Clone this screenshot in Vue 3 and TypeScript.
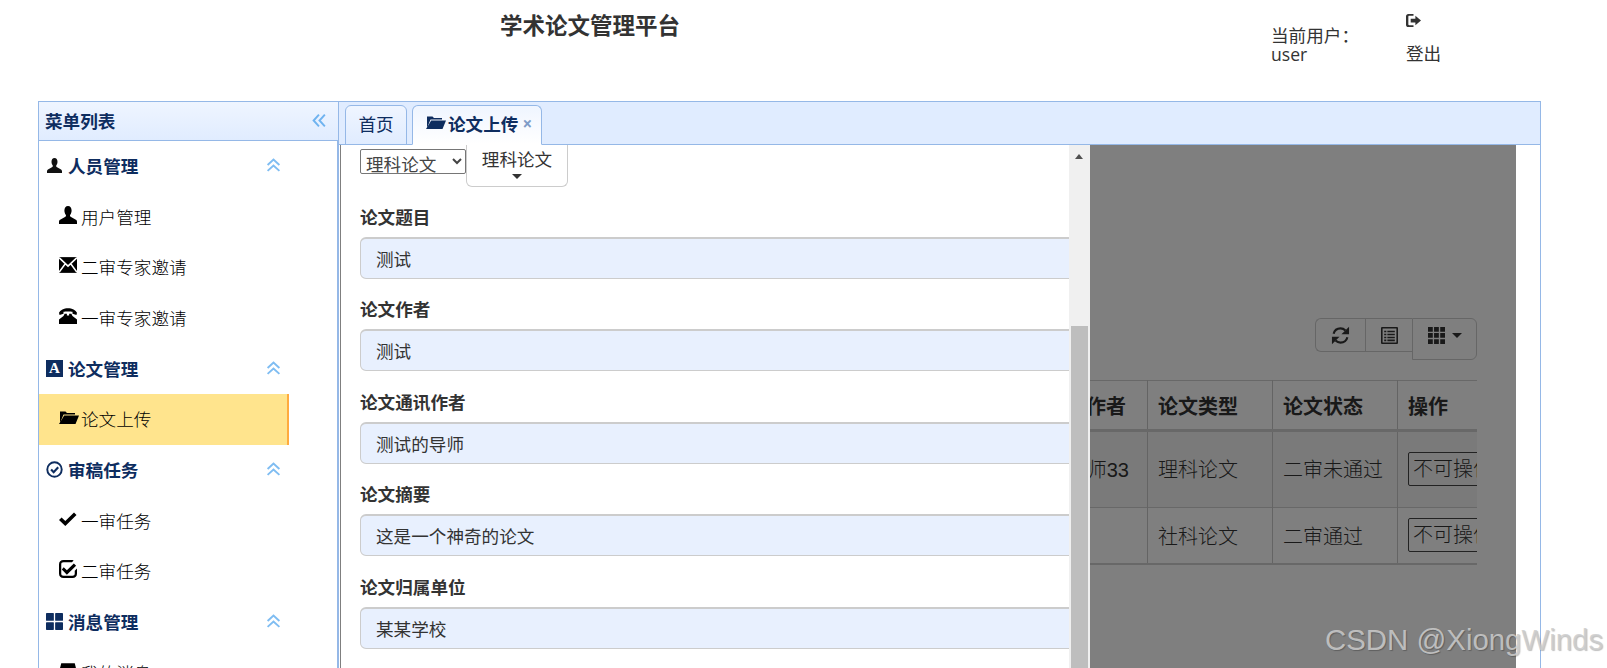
<script setup lang="ts">
interface Item { icon: string; label: string; active?: boolean }
interface Group { icon: string; label: string; items: Item[] }

const groups: Group[] = [
  { icon: 'user', label: '人员管理', items: [
    { icon: 'user', label: '用户管理' },
    { icon: 'envelope', label: '二审专家邀请' },
    { icon: 'phone', label: '一审专家邀请' },
  ] },
  { icon: 'font', label: '论文管理', items: [
    { icon: 'folder', label: '论文上传', active: true },
  ] },
  { icon: 'okcircle', label: '审稿任务', items: [
    { icon: 'ok', label: '一审任务' },
    { icon: 'check', label: '二审任务' },
  ] },
  { icon: 'large', label: '消息管理', items: [
    { icon: 'inbox', label: '我的消息' },
  ] },
]

const fields = [
  { label: '论文题目', value: '测试' },
  { label: '论文作者', value: '测试' },
  { label: '论文通讯作者', value: '测试的导师' },
  { label: '论文摘要', value: '这是一个神奇的论文' },
  { label: '论文归属单位', value: '某某学校' },
]

const columns = ['论文题目', '论文作者', '导师作者', '论文类型', '论文状态', '操作']
const rows = [
  ['测试', '测试', '导师33', '理科论文', '二审未通过'],
  ['测试', '测试', '', '社科论文', '二审通过'],
]
</script>

<template>
  <div class="page">
    <svg class="defs" aria-hidden="true">
      <symbol id="i-user" viewBox="0 .5 16 14" preserveAspectRatio="none"><path d="M8 .5C6 .5 4.800 2 4.800 4c0 1.300.5 2.500 1.200 3.300.4.500.3 1.200-.3 1.500L1 11.200c-.6.300-1 .9-1 1.600V14.500h16v-1.700c0-.7-.4-1.300-1-1.600L10.300 8.800c-.6-.3-.7-1-.3-1.500.7-.8 1.200-2 1.200-3.300C11.200 2 10 .5 8 .5z"/></symbol>
      <symbol id="i-envelope" viewBox="0 0 16 16"><rect y="1" width="16" height="14"/><path d="M0 1.500 8 9l8-7.500M0 14.500 5.500 7M16 14.500 10.500 7" stroke="#fff" stroke-width="1.500" fill="none"/></symbol>
      <symbol id="i-phone" viewBox="0 0 16 16"><path d="M0 5.200C1 2.500 4.500 1 8 1s7 1.500 8 4.200L15.500 7 12 6V4.300C10.500 3.800 5.500 3.800 4 4.300V6L.5 7z"/><path d="M5 6h2v1.500h2V6h2l1 2 4 3v4H0v-4l4-3z"/></symbol>
      <symbol id="i-folder" viewBox="0 0 20 16"><path d="M1 14 1 2.500h5.500L8 4h8v1.500H4.500z"/><path d="M5.200 6.500H20L16.500 15H0z"/></symbol>
      <symbol id="i-okcircle" viewBox="0 0 16 16"><circle cx="8" cy="8" r="6.800" fill="none" stroke="currentColor" stroke-width="1.800"/><path d="M4.800 8 7.200 10.500 11.500 5.800" fill="none" stroke="currentColor" stroke-width="2"/></symbol>
      <symbol id="i-ok" viewBox="0 0 18 16"><path d="M0 9 2.600 6.400 6.300 10 15 1.500 17.500 4 6.300 15z"/></symbol>
      <symbol id="i-check" viewBox="0 0 16 16"><path d="M13 .5 11.500 2H4C2.500 2 2 2.600 2 4v8c0 1.200.6 2 2 2h8c1.200 0 2-.7 2-2V9.500l2-2V12c0 2.500-1.500 4-4 4H4c-2.500 0-4-1.500-4-4V4c0-2.500 1.500-4 4-4h8c.4 0 .7.200 1 .5z"/><path d="M4.200 6.500 7 9.200 13.200 3l2 2L7 13.200 2.500 8.500z"/></symbol>
      <symbol id="i-large" viewBox="0 0 16 16"><rect width="7.400" height="7.400" rx=".6"/><rect x="8.600" width="7.400" height="7.400" rx=".6"/><rect y="8.600" width="7.400" height="7.400" rx=".6"/><rect x="8.600" y="8.600" width="7.400" height="7.400" rx=".6"/></symbol>
      <symbol id="i-inbox" viewBox="0 0 16 16"><path d="M2 1h12l2 8v5H0V9z"/></symbol>
      <symbol id="i-logout" viewBox="0 0 16 16"><path d="M2.500 1H8v2H3.500C3 3 2.500 3.400 2.500 4v8c0 .6.500 1 1 1H8v2H2.500C1 15 0 14 0 12.500v-9C0 2 1 1 2.500 1z"/><path d="M5 6h5V3l6 5-6 5v-3H5z"/></symbol>
      <symbol id="i-refresh" viewBox="0 0 16 16"><path d="M2.200 6.500C2.900 3.800 5.200 2 8 2c1.700 0 3.100.7 4.200 1.800" fill="none" stroke="currentColor" stroke-width="1.800"/><path d="M15.200.6V7H8.800z"/><path d="M13.800 9.500C13.100 12.200 10.800 14 8 14c-1.700 0-3.100-.7-4.200-1.800" fill="none" stroke="currentColor" stroke-width="1.800"/><path d="M.8 15.400V9h6.400z"/></symbol>
      <symbol id="i-listalt" viewBox="0 0 16 16"><path fill-rule="evenodd" d="M1 0h14a1 1 0 0 1 1 1v14a1 1 0 0 1-1 1H1a1 1 0 0 1-1-1V1a1 1 0 0 1 1-1zm.5 1.500v13h13v-13z"/><path d="M3 3.500h2v1.500H3zM6 3.500h7v1.500H6zM3 6.300h2v1.500H3zM6 6.300h7v1.500H6zM3 9.100h2v1.500H3zM6 9.100h7v1.500H6zM3 11.800h2v1.500H3zM6 11.800h7v1.500H6z"/></symbol>
      <symbol id="i-th" viewBox="0 0 16 16"><path d="M0 0h4.500v4.500H0zM5.700 0h4.500v4.500H5.700zM11.500 0H16v4.500h-4.500zM0 5.700h4.500v4.500H0zM5.700 5.700h4.500v4.500H5.700zM11.500 5.700H16v4.500h-4.500zM0 11.500h4.500V16H0zM5.700 11.500h4.500V16H5.700zM11.500 11.500H16V16h-4.500z"/></symbol>
      <symbol id="i-chev" viewBox="0 0 14 14"><path d="M1.500 6.500 7 1.500l5.500 5M1.500 12 7 7l5.500 5" fill="none" stroke="currentColor" stroke-width="1.800"/></symbol>
      <symbol id="i-chevl" viewBox="0 0 14 14"><path d="M6.500 1.500 1.500 7l5 5.500M12 1.500 7 7l5 5.500" fill="none" stroke="currentColor" stroke-width="1.800"/></symbol>
    </svg>

    <header class="top">
      <h1 class="title">学术论文管理平台</h1>
      <div class="who">
        <div>当前用户：</div>
        <div class="who-name">user</div>
      </div>
      <div class="logout">
        <svg class="ico-logout"><use href="#i-logout" /></svg>
        <div>登出</div>
      </div>
    </header>

    <main class="layout">
      <aside class="side">
        <div class="side-head">
          <span>菜单列表</span>
          <svg class="ico-collapse"><use href="#i-chevl" /></svg>
        </div>
        <div v-for="g in groups" :key="g.label" class="group">
          <div class="group-head">
            <span v-if="g.icon === 'font'" class="font-ico">A</span>
            <svg v-else class="ico-head" :class="'h-' + g.icon"><use :href="'#i-' + g.icon" /></svg>
            <span class="group-label">{{ g.label }}</span>
            <svg class="ico-chev"><use href="#i-chev" /></svg>
          </div>
          <div
            v-for="it in g.items"
            :key="it.label"
            class="item"
            :class="{ active: it.active }"
          >
            <svg class="ico-item" :class="'ico-' + it.icon"><use :href="'#i-' + it.icon" /></svg>
            <span>{{ it.label }}</span>
          </div>
        </div>
      </aside>

      <section class="center">
        <div class="tabs">
          <div class="tab">首页</div>
          <div class="tab tab-on">
            <svg class="ico-tab"><use href="#i-folder" /></svg>
            <span>论文上传</span>
            <span class="close">×</span>
          </div>
        </div>

        <div class="body">
          <div class="toolbar">
            <div class="tbtn tbtn-a"><svg class="ico-tool ico-refresh"><use href="#i-refresh" /></svg></div>
            <div class="tbtn tbtn-b"><svg class="ico-tool"><use href="#i-listalt" /></svg></div>
            <div class="tbtn tbtn-c"><svg class="ico-tool"><use href="#i-th" /></svg><i class="caret"></i></div>
          </div>
          <div class="table-wrap">
            <table class="grid">
              <colgroup>
                <col class="c1" /><col class="c1" /><col class="c2" /><col class="c3" /><col class="c3" /><col class="c4" />
              </colgroup>
              <thead>
                <tr>
                  <th v-for="(c, i) in columns" :key="i" :class="{ 'to-right': i === 2 }">{{ c }}</th>
                </tr>
              </thead>
              <tbody>
                <tr v-for="(r, ri) in rows" :key="ri" :class="ri === 0 ? 'odd' : 'even'">
                  <td v-for="(v, ci) in r" :key="ci" :class="{ 'to-right': ci === 2 }">{{ v }}</td>
                  <td>
                    <select class="op"><option>不可操作</option></select>
                  </td>
                </tr>
              </tbody>
            </table>
          </div>

          <div class="backdrop">
            <div class="modal">
              <div class="modal-body">
                <div class="type-row">
                  <select class="type-native"><option>理科论文</option><option>社科论文</option></select>
                  <div class="type-btn">
                    <span>理科论文</span>
                    <i class="caret"></i>
                  </div>
                </div>
                <div v-for="f in fields" :key="f.label" class="field">
                  <label class="field-label">{{ f.label }}</label>
                  <input class="field-input" :value="f.value" readonly />
                </div>
              </div>
              <div class="scroll">
                <i class="scroll-up"></i>
                <div class="scroll-thumb"></div>
              </div>
            </div>
          </div>
        </div>
      </section>
    </main>

    <div class="mark">CSDN @XiongWinds</div>
  </div>
</template>

<style>
html, body { margin: 0; padding: 0; background: #fff; overflow: hidden; }
</style>

<style scoped>
.page {
  position: relative;
  width: 1607px;
  height: 668px;
  overflow: hidden;
  background: #fff;
  color: #333;
  font-family: "Open Sans", "Noto Sans CJK SC", sans-serif;
  font-size: 17.6px;
}
.defs { position: absolute; width: 0; height: 0; }
svg { fill: currentColor; display: block; flex: none; }

.top {
  height: 101px;
  display: flex;
  align-items: flex-start;
  box-sizing: border-box;
}
.title {
  margin: 10px 0 0 500px;
  width: 771px;
  font-size: 22.5px;
  line-height: 32px;
  font-weight: 700;
  color: #333;
}
.who {
  width: 135px;
  margin-top: 26px;
  line-height: 19px;
}
.logout { line-height: 24px; margin-top: 13px; }
.ico-logout { width: 15px; height: 15px; margin-bottom: 13px; }

.layout {
  display: flex;
  margin-left: 38px;
  width: 1503px;
  height: 567px;
}
.side {
  width: 300px;
  flex: none;
  box-sizing: border-box;
  border-left: 1px solid #95b8e7;
  border-right: 1px solid #95b8e7;
  color: #0e2d5f;
}
.side-head {
  height: 40px;
  box-sizing: border-box;
  margin-right: -1px;
  padding: 0 11px 2px 6px;
  display: flex;
  align-items: center;
  justify-content: space-between;
  font-weight: 700;
  background: linear-gradient(#eff5ff, #e0ecff);
  border-top: 1px solid #95b8e7;
  border-bottom: 1px solid #95b8e7;
}
.ico-collapse { width: 15px; height: 15px; color: #6fb3f0; }

.group-head {
  height: 50.7px;
  box-sizing: border-box;
  display: flex;
  align-items: center;
  padding: 0 0 2px 7px;
  width: 245px;
  font-weight: 700;
}
.ico-head { width: 17px; height: 17px; margin-right: 5px; }
.h-user { width: 15px; height: 15px; margin: 0 6px 0 1px; color: #111; }
.font-ico {
  width: 17px;
  height: 17px;
  margin-right: 5px;
  background: #0e2d5f;
  color: #fff;
  font: 700 15px/17px "Liberation Serif", serif;
  text-align: center;
  flex: none;
}
.group-label { width: 198px; }
.ico-chev { width: 15px; height: 15px; color: #7fbdf2; }
.item {
  height: 50.7px;
  width: 250px;
  box-sizing: border-box;
  display: flex;
  align-items: center;
  padding: 0 0 2px 20px;
  color: #000;
  font-weight: 300;
}
.item.active {
  background: #ffe48d;
  border-right: 2px solid #ffab3f;
}
.ico-item { width: 18px; height: 18px; margin-right: 4px; margin-top: -3px; color: #000; }
.ico-folder { width: 20px; margin-right: 2px; }

.center {
  flex: 1;
  min-width: 0;
  display: flex;
  flex-direction: column;
  box-sizing: border-box;
  border-left: 1px solid #95b8e7;
  border-right: 1px solid #95b8e7;
}
.tabs {
  height: 44px;
  flex: none;
  box-sizing: border-box;
  display: flex;
  align-items: flex-end;
  gap: 5px;
  padding-left: 6px;
  background: #e0ecff;
  border-top: 1px solid #95b8e7;
  border-bottom: 1px solid #95b8e7;
}
.tab {
  width: 62px;
  height: 40px;
  margin-bottom: -1px;
  padding-bottom: 3px;
  box-sizing: border-box;
  display: flex;
  align-items: center;
  justify-content: center;
  color: #0e2d5f;
  background: linear-gradient(#eff5ff, #e0ecff);
  border: 1px solid #95b8e7;
  border-radius: 6px 6px 0 0;
}
.tab-on {
  width: 130px;
  justify-content: flex-start;
  padding-left: 13px;
  font-weight: 700;
  background: linear-gradient(#eff5ff, #fff);
  border-bottom-color: #fff;
}
.ico-tab { width: 20px; height: 16px; margin: -3px 2px 0 0; }
.close {
  margin-left: 4px;
  color: #7f9cc8;
  font-weight: 700;
  font-size: 17px;
}

.body {
  position: relative;
  flex: 1;
  min-height: 0;
  overflow: hidden;
  padding: 173px 63px 0 21px;
  font-family: "Liberation Sans", "Noto Sans CJK SC", sans-serif;
  font-size: 20px;
}
.toolbar {
  display: flex;
  justify-content: flex-end;
  align-items: flex-start;
}
.tbtn {
  box-sizing: border-box;
  height: 34px;
  border: 1px solid #ccc;
  display: flex;
  align-items: center;
  justify-content: center;
  color: #333;
}
.tbtn-a { width: 50px; border-radius: 6px 0 0 6px; border-right: 0; }
.tbtn-b { width: 47px; border-right: 0; }
.tbtn-c { width: 65px; height: 42px; border-radius: 0 6px 6px 0; gap: 7px; padding-bottom: 8px; }
.ico-tool { width: 17px; height: 17px; }
.ico-refresh { width: 19px; height: 19px; }
.caret {
  display: block;
  width: 0;
  height: 0;
  border-left: 5px solid transparent;
  border-right: 5px solid transparent;
  border-top: 5px solid #333;
}
.table-wrap { margin-top: 20px; overflow: hidden; }
.grid {
  table-layout: fixed;
  border-collapse: collapse;
  width: 1237px;
  color: #333;
  border-top: 1px solid #d0d0d0;
  border-bottom: 2px solid #d0d0d0;
}
.c1 { width: 318px; }
.c2 { width: 151px; }
.c3 { width: 125px; }
.c4 { width: 200px; }
th, td {
  padding: 0 10px;
  text-align: left;
  border-left: 1px solid #c8c8c8;
  white-space: nowrap;
  overflow: hidden;
  font-weight: 300;
}
thead tr { height: 50px; }
th { font-weight: 700; border-bottom: 3px solid #d0d0d0; }
tbody tr + tr td { border-top: 1px solid #d0d0d0; }
.odd { height: 77px; background: #f5f5f5; }
.odd td { padding-bottom: 2px; }
.even { height: 56px; }
.to-right { text-align: right; padding-right: 18px; }
th.to-right { padding-right: 21px; }
.op {
  display: block;
  width: 140px;
  height: 34px;
  box-sizing: border-box;
  background: transparent;
  border: 1px solid #444;
  border-radius: 2px;
  color: #333;
  font: inherit;
}

.backdrop {
  position: absolute;
  left: 1px;
  right: 24px;
  top: 0;
  bottom: 0;
  background: rgba(0, 0, 0, 0.5);
  padding-left: 1px;
}
.modal {
  width: 749px;
  height: 100%;
  display: flex;
  background: #fff;
  color: #333;
  font-family: "Noto Sans CJK SC", sans-serif;
  font-size: 17.6px;
}
.modal-body {
  flex: 1;
  min-width: 0;
  overflow: hidden;
  padding-left: 19px;
}
.type-row { display: flex; align-items: flex-start; height: 60px; }
.type-native {
  width: 106px;
  height: 25px;
  margin-top: 4px;
  box-sizing: border-box;
  font: inherit;
  line-height: 20px;
  color: #444;
  background: #fff;
  border: 1px solid #767676;
  border-radius: 2px;
  padding: 0 0 0 1px;
}
.type-btn {
  width: 102px;
  height: 42px;
  box-sizing: border-box;
  border: 1px solid #ccc;
  border-top: 0;
  border-radius: 0 0 6px 6px;
  display: flex;
  flex-direction: column;
  align-items: center;
  line-height: 28px;
}
.type-btn .caret { margin-top: 1px; }
.field { height: 92.4px; }
.field-label {
  display: block;
  font-weight: 700;
  line-height: 24px;
  margin-bottom: 8px;
}
.field-input {
  display: block;
  width: calc(100% + 12px);
  height: 42px;
  box-sizing: border-box;
  padding: 0 15px;
  background: #e8f0fe;
  border: 1px solid #ccc;
  border-top-width: 2px;
  border-radius: 6px;
  font: inherit;
  color: #333;
  outline: none;
}
.scroll {
  position: relative;
  width: 21px;
  flex: none;
  background: #f0f0f0;
}
.scroll-up {
  position: absolute;
  left: 6px;
  top: 9px;
  width: 0;
  height: 0;
  border-left: 4.5px solid transparent;
  border-right: 4.5px solid transparent;
  border-bottom: 5px solid #505050;
}
.scroll-thumb {
  position: absolute;
  left: 2px;
  right: 2px;
  top: 181px;
  bottom: 0;
  background: #bebebe;
}

.mark {
  position: absolute;
  left: 1325px;
  top: 622px;
  font-family: "Liberation Sans", sans-serif;
  font-size: 29.4px;
  line-height: 36px;
  color: rgba(205, 205, 205, 0.85);
  text-shadow: 1px 1px 1px rgba(0, 0, 0, 0.25);
  white-space: nowrap;
}
</style>
